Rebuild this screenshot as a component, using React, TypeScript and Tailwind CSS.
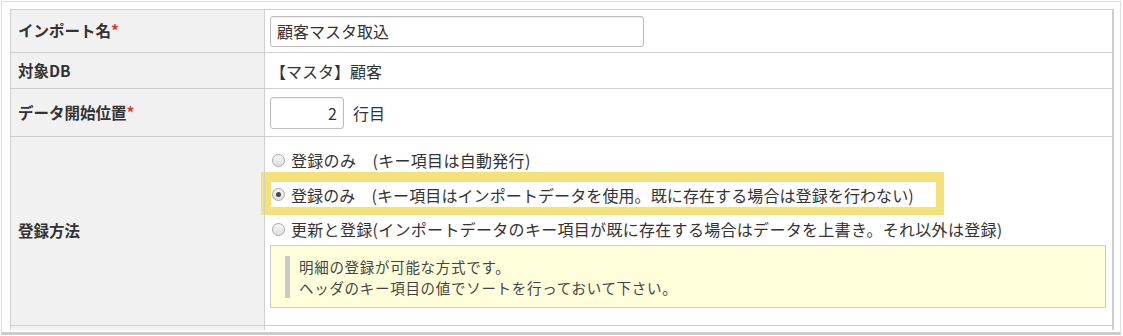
import React from 'react'

const font = "font-['Noto_Sans_CJK_JP','Noto_Sans',sans-serif]"

function Radio({ checked }: { checked?: boolean }) {
  return (
    <span className="ml-[1px] flex h-[13px] w-[13px] shrink-0 items-center justify-center rounded-full border border-[#a9a9a9] bg-gradient-to-b from-[#f7f7f7] to-[#dedede]">
      {checked && <span className="h-[5px] w-[5px] rounded-full bg-[#4a4a4a]" />}
    </span>
  )
}

function Label({ text, required }: { text: string; required?: boolean }) {
  return (
    <td className="w-[255px] border border-[#cfcfcf] bg-[#f1f1f1] pl-[7px] align-middle text-[15.5px] font-bold text-[#333]">
      {text}
      {required && <span className="text-[#e0352b]">*</span>}
    </td>
  )
}

export default function App() {
  return (
    <div className={`h-[336px] w-[1123px] overflow-hidden bg-white ${font}`}>
      <div className="ml-[1px] mt-[1px] h-[334px] w-[1120px] border border-[#dedede] border-b-[3px] border-b-[#cbcbcb] pl-[8px] pt-[7px]">
        <div className="h-[321px] w-[1104px] overflow-hidden">
          <table className="w-[1104px] border-collapse border-r-2 border-[#cfcfcf] text-[#333]">
            <tbody>
              <tr className="h-[43px]">
                <Label text="インポート名" required />
                <td className="border border-[#cfcfcf] pl-[5px] align-middle">
                  <div className="flex h-[31px] w-[374px] items-center rounded-[3px] border border-[#bdbdbd] pl-[6px] text-[16px] shadow-[inset_0_1px_2px_rgba(0,0,0,0.08)]">
                    顧客マスタ取込
                  </div>
                </td>
              </tr>
              <tr className="h-[36px]">
                <Label text="対象DB" />
                <td className="border border-[#cfcfcf] pl-[5px] align-middle text-[16px]">【マスタ】顧客</td>
              </tr>
              <tr className="h-[48px]">
                <Label text="データ開始位置" required />
                <td className="border border-[#cfcfcf] pl-[5px] align-middle">
                  <div className="flex items-center gap-[9px] text-[16px]">
                    <div className="flex h-[32px] w-[74px] items-center justify-end rounded-[3px] border border-[#bdbdbd] pr-[6px] shadow-[inset_0_1px_2px_rgba(0,0,0,0.08)]">
                      2
                    </div>
                    <span>行目</span>
                  </div>
                </td>
              </tr>
              <tr className="h-[186px]">
                <Label text="登録方法" />
                <td className="border border-[#cfcfcf] pl-[6px] pr-[6px] pt-[11px] pb-[17px] align-top text-[16px] tracking-[0.3px]">
                  <div className="flex h-[24px] items-center gap-[6px]">
                    <Radio />
                    <span>登録のみ　(キー項目は自動発行)</span>
                  </div>
                  <div className="-ml-[10px] w-[683px] border-b-[8px] border-l-[10px] border-r-[8px] border-t-[10px] border-[#f3e27a] bg-white">
                    <div className="flex h-[25px] items-center gap-[6px] tracking-[0.1px]">
                      <Radio checked />
                      <span>登録のみ　(キー項目はインポートデータを使用。既に存在する場合は登録を行わない)</span>
                    </div>
                  </div>
                  <div className="mt-[2px] flex h-[24px] items-center gap-[6px]">
                    <Radio />
                    <span>更新と登録(インポートデータのキー項目が既に存在する場合はデータを上書き。それ以外は登録)</span>
                  </div>
                  <div className="-ml-[1px] mt-[4px] h-[63px] w-[836px] border border-[#cccccc] bg-[#fefedb] pl-[14px] pt-[10px]">
                    <div className="border-l-[5px] border-[#cacaca] pl-[9px] text-[14.5px] leading-[21px] tracking-[0.7px] text-[#444]">
                      <div>明細の登録が可能な方式です。</div>
                      <div>ヘッダのキー項目の値でソートを行っておいて下さい。</div>
                    </div>
                  </div>
                </td>
              </tr>
              <tr className="h-[10px]">
                <td className="border border-[#cfcfcf] bg-[#f1f1f1]" />
                <td className="border border-[#cfcfcf]" />
              </tr>
            </tbody>
          </table>
        </div>
      </div>
    </div>
  )
}
